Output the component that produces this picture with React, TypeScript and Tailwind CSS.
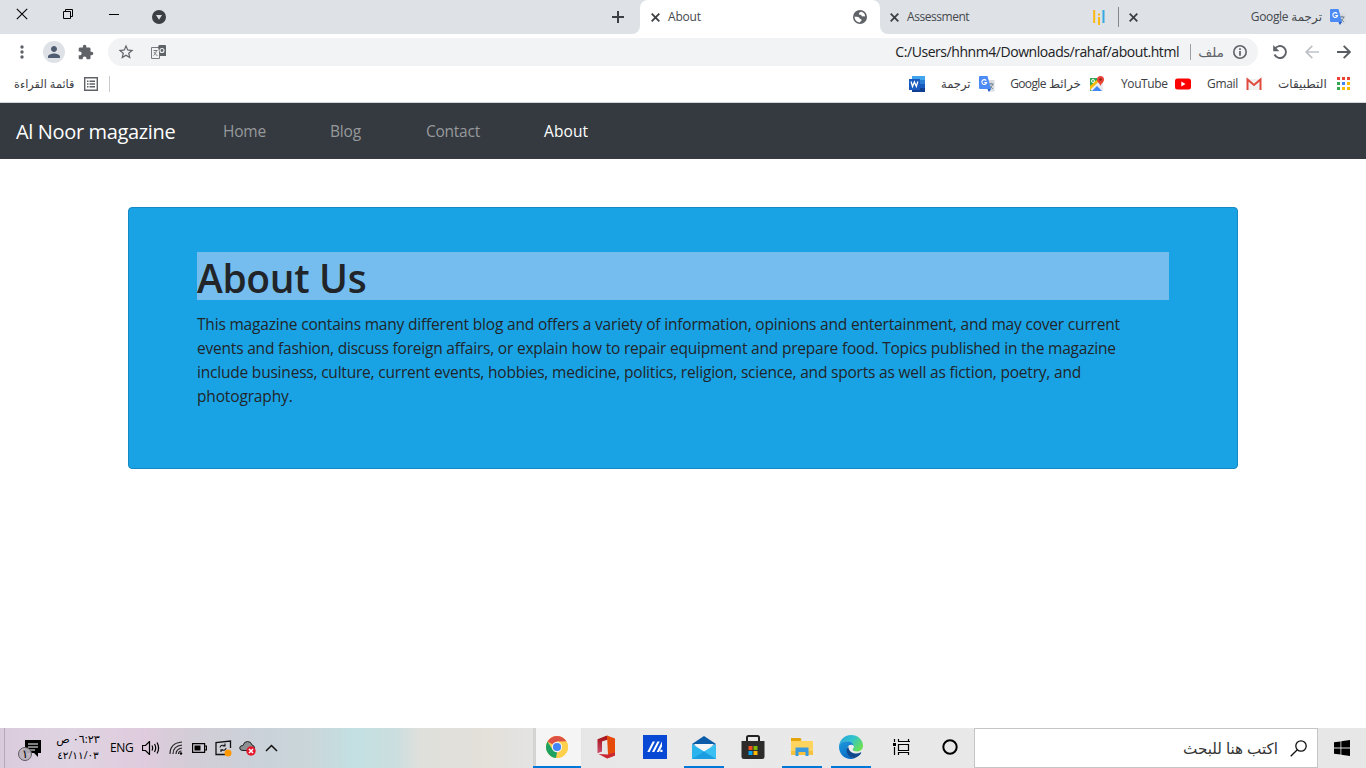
import React from "react";
import { MdStarBorder, MdPerson } from "react-icons/md";

const Close = () => (
  <svg className="size-[9px] shrink-0" viewBox="0 0 9 9"><path d="M.7.7l7.600 7.600M8.300.7L.7 8.300" stroke="#3c4043" strokeWidth="1.800" /></svg>
);

const Translate = () => (
  <svg className="size-4 shrink-0" viewBox="0 0 16 16">
    <path d="M6 4h9.5v11.5H10z" fill="#dadce0" />
    <path d="M9.5 8h5M12 6.8V8M13.8 8c-.5 2-2 3.500-3.500 4.500M10.500 9.500c.8 1.400 2 2.500 3.300 3.200" stroke="#607988" strokeWidth=".9" fill="none" />
    <path d="M1 0h7.500l3.500 13H1a1 1 0 0 1-1-1V1a1 1 0 0 1 1-1z" fill="#4c8bf5" />
    <path d="M8.500 13H12l-2.200 3z" fill="#1a56c4" />
    <path d="M7.200 4.600A2.400 2.400 0 1 0 7.600 6.600H5.300" stroke="#fff" strokeWidth="1.100" fill="none" />
  </svg>
);

const Globe = () => (
  <svg className="size-[14px] shrink-0" viewBox="0 0 14 14">
    <circle cx="7" cy="7" r="7" fill="#5f6368" />
    <path d="M8.300 1.700C7 2 6 2.700 6 3.800c0 1 .9 1.100 1.900 1.100.8 0 .6 1.300 1.500 1.500.9.100 1.200-.6 2.800.4A5.400 5.400 0 0 0 8.300 1.700z" fill="#fff" />
    <path d="M1.600 6.600c1.200.300 3.500.100 4.500.900.900.700.300 1.400 1.400 1.600 1 .200 1.300.500 1 1.400-.3.800-1.200.7-1.500 1.900A5.400 5.400 0 0 1 1.600 6.600z" fill="#fff" />
  </svg>
);

function TabStrip() {
  return (
    <div className="flex h-[34px] bg-[#dee1e6] text-[12px] text-[#45494d]">
      <div className="flex h-7 w-[137px] shrink-0">
        <div className="flex w-[44px] items-center justify-center">
          <svg width="12" height="12" viewBox="0 0 12 12"><path d="M.8.8l10.400 10.400M11.200.8L.8 11.200" stroke="#000" strokeWidth="1.100" /></svg>
        </div>
        <div className="flex w-[47px] items-center justify-center">
          <svg width="10" height="10" viewBox="0 0 10 10" fill="none" stroke="#000"><path d="M.5 2.500h7v7h-7zM2.500 2.500v-2h7v7h-2" /></svg>
        </div>
        <div className="flex w-[46px] items-center justify-center">
          <svg width="10" height="10" viewBox="0 0 10 10"><path d="M0 5.500h10" stroke="#000" /></svg>
        </div>
      </div>
      <div className="flex w-[44px] shrink-0 items-center justify-center">
        <svg width="14" height="14" viewBox="0 0 14 14"><circle cx="7" cy="7" r="7" fill="#3c4043" /><path d="M4 5h6L7 9.700z" fill="#dee1e6" /></svg>
      </div>
      <div className="flex-1" />
      <div className="flex w-[28px] shrink-0 items-center justify-center">
        <svg width="12" height="12" viewBox="0 0 12 12"><path d="M6 0v12M0 6h12" stroke="#3c4043" strokeWidth="2" /></svg>
      </div>
      <div className="flex w-2 shrink-0 bg-[linear-gradient(#dee1e6_50%,#fff_50%)]"><div className="h-full w-2 rounded-br-lg bg-[#dee1e6]" /></div>
      <div className="flex w-[240px] shrink-0 bg-[#dee1e6]">
        <div className="flex flex-1 items-center rounded-t-lg bg-white pr-[13px] pl-[11px]">
          <Close />
          <span className="ml-2 tracking-[-0.200px]">About</span>
          <span className="flex-1" />
          <Globe />
        </div>
      </div>
      <div className="flex w-[238px] shrink-0 bg-white">
        <div className="flex flex-1 items-center rounded-bl-lg bg-[#dee1e6] pr-[13px] pl-[10px]">
          <Close />
          <span className="ml-2 tracking-[-0.450px]">Assessment</span>
          <span className="flex-1" />
          <svg width="12" height="17" viewBox="0 0 12 17">
            <path d="M1.200 1v13M6 8v8" stroke="#fcb813" strokeWidth="2" /><path d="M5 4.500h2v2H5z" fill="#fcb813" /><path d="M10.500 1v13" stroke="#35a9e0" strokeWidth="2" />
          </svg>
        </div>
      </div>
      <div className="flex w-[248px] shrink-0 items-center pr-[20px]">
        <div className="h-5 w-px bg-[#85888c]" />
        <span className="ml-[10px] flex"><Close /></span>
        <span className="flex-1" />
        <span dir="rtl" className="mr-2 text-[12px] whitespace-nowrap tracking-[-0.350px]">ترجمة Google</span>
        <Translate />
      </div>
    </div>
  );
}

function Toolbar() {
  return (
    <div className="flex h-9 items-center bg-white text-[#5f6368]">
      <div className="flex w-[43px] shrink-0 justify-center">
        <svg width="4" height="14" viewBox="0 0 4 14" fill="#5f6368"><circle cx="2" cy="2" r="1.700" /><circle cx="2" cy="7" r="1.700" /><circle cx="2" cy="12" r="1.700" /></svg>
      </div>
      <div className="flex size-[22px] shrink-0 items-center justify-center rounded-full bg-[#dee1e6] text-[#4f5b70]"><MdPerson className="size-[18px]" /></div>
      <svg className="ml-[13px] size-4 shrink-0" viewBox="1 0 23 23" fill="#5f6368">
        <path d="M20.500 11H19V7c0-1.100-.9-2-2-2h-4V3.500C13 2.120 11.880 1 10.500 1S8 2.120 8 3.500V5H4c-1.100 0-2 .9-2 2v3.800h1.500c1.490 0 2.700 1.210 2.700 2.700s-1.210 2.700-2.700 2.700H2V20c0 1.100.9 2 2 2h3.800v-1.500c0-1.490 1.210-2.700 2.700-2.700s2.700 1.210 2.700 2.700V22H17c1.100 0 2-.9 2-2v-4h1.500a2.500 2.500 0 0 0 0-5z" />
      </svg>
      <div className="ml-[14px] flex h-7 w-[1150px] shrink-0 items-center rounded-full bg-[#f1f3f4] pr-[11px] pl-[9px]">
        <MdStarBorder className="size-[18px]" />
        <svg className="ml-[16px]" width="15" height="15" viewBox="0 0 15 15">
          <path d="M.5 2.500h8v11h-8z" fill="none" stroke="#777a7e" /><path d="M8 0h6a1 1 0 0 1 1 1v10H9L7 2z" fill="#5f6368" />
          <path d="M2.500 5.500h4M5.500 5.500c-.5 2.500-1.500 4-3 5M3 7c1 2 2 3 3.500 3.500" stroke="#777a7e" fill="none" />
          <circle cx="11" cy="5.500" r="2" fill="none" stroke="#f1f3f4" strokeWidth="1.100" />
        </svg>
        <span className="flex-1" />
        <span className="-mt-px text-[14px] tracking-[-0.440px] text-[#202124]">C:/Users/hhnm4/Downloads/rahaf/about.html</span>
        <span className="ml-[11px] h-4 w-px bg-[#9aa0a6]" />
        <span className="ml-[7px] w-[26px] text-right text-[13.500px]">ملف</span>
        <svg className="ml-[9px]" width="14" height="14" viewBox="0 0 14 14"><circle cx="7" cy="7" r="6.200" fill="none" stroke="#5f6368" strokeWidth="1.600" /><path d="M7 3.200v1.700M7 6v4.800" stroke="#5f6368" strokeWidth="1.700" /></svg>
      </div>
      <svg className="ml-[15px] shrink-0" width="14" height="14" viewBox="0 0 14 14"><path d="M1.700 4.200A6 6 0 1 1 1.500 9.500" fill="none" stroke="#5f6368" strokeWidth="1.900" /><path d="M.2 0v6.200h6.200z" fill="#5f6368" /></svg>
      <svg className="ml-[18px] shrink-0" width="14" height="14" viewBox="0 0 14 14" fill="none" stroke="#bdc1c6" strokeWidth="1.700"><path d="M14 7H1.500M7.300.8L1.200 7l6.100 6.200" /></svg>
      <svg className="ml-[18px] shrink-0" width="14" height="14" viewBox="0 0 14 14" fill="none" stroke="#5a5e63" strokeWidth="1.900"><path d="M0 7h12.500M6.700.8L12.800 7l-6.100 6.200" /></svg>
    </div>
  );
}

const appDots = ["#ea4335", "#ea4335", "#ea4335", "#34a853", "#4285f4", "#fbbc04", "#34a853", "#fbbc04", "#fbbc04"];

function Bookmarks() {
  return (
    <div className="flex h-[33px] items-center border-b border-[#d5d6d9] bg-white pb-[5px] text-[12px] text-[#3c4043]">
      <span className="ml-[14px] w-[61px] pt-px text-[11.300px] whitespace-nowrap">قائمة القراءة</span>
      <svg className="ml-[9px]" width="14" height="14" viewBox="0 0 14 14"><path d="M.7.7h12.600v12.600H.7z" fill="none" stroke="#5f6368" strokeWidth="1.400" /><path d="M3 4.200h1.500M5.500 4.200H11M3 7h1.500M5.500 7H11M3 9.800h1.500M5.500 9.800H11" stroke="#5f6368" strokeWidth="1.400" /></svg>
      <span className="ml-[11px] h-4 w-px bg-[#c8cacd]" />
      <span className="flex-1" />
      <svg width="16" height="16" viewBox="0 0 16 16">
        <path d="M3 0h13v4H3z" fill="#41a5ee" /><path d="M3 4h13v4H3z" fill="#2b7cd3" /><path d="M3 8h13v4H3z" fill="#185abd" /><path d="M3 12h13v4H3z" fill="#103f91" />
        <path d="M0 3h11v11H0z" fill="#185abd" /><path d="M2 5.500l1.500 5 1.900-4.500 1.900 4.500 1.600-5" fill="none" stroke="#fff" strokeWidth="1.300" />
      </svg>
      <span className="ml-[16px] w-[30px] text-[11.500px]">ترجمة</span>
      <span className="ml-2"><Translate /></span>
      <span dir="rtl" className="ml-[15px] w-[71px] text-[12px] whitespace-nowrap tracking-[-0.650px]">خرائط Google</span>
      <svg className="ml-2" width="16" height="16" viewBox="0 0 16 16">
        <path d="M1 2h13v13H1z" fill="#34a853" /><path d="M1 13L11 4l3 3v8H3z" fill="#e8eaed" /><path d="M3 15l5-5 5 5z" fill="#4285f4" /><path d="M1 10V14l9-9-1-2z" fill="#fbbc04" />
        <path d="M11.500 0a3.500 3.500 0 0 1 3.500 3.700c0 2.300-2.500 3.300-3.500 6.300C10.500 7 8 6 8 3.700A3.500 3.500 0 0 1 11.500 0z" fill="#ea4335" /><circle cx="11.500" cy="3.500" r="1.200" fill="#8c211b" />
        <circle cx="4" cy="5" r="1.500" fill="none" stroke="#fff" />
      </svg>
      <span className="ml-4 w-[46px] tracking-[-0.400px]">YouTube</span>
      <svg className="ml-2" width="16" height="16" viewBox="0 0 16 16"><rect y="2.500" width="16" height="11" rx="2.500" fill="red" /><path d="M6.300 5.500L10.500 8l-4.200 2.500z" fill="#fff" /></svg>
      <span className="ml-4 w-[31px] tracking-[-0.3px]">Gmail</span>
      <svg className="ml-2" width="16" height="16" viewBox="0 0 16 16"><path d="M1 3h14v11H1z" fill="#f1f1f1" /><path d="M1.500 14V3.500L8 9l6.500-5.500V14" fill="none" stroke="#e04a3f" strokeWidth="2" /></svg>
      <span className="ml-4 w-[50px] text-[12px] whitespace-nowrap">التطبيقات</span>
      <svg className="mr-[16px] ml-[9px]" width="13" height="13" viewBox="0 0 13 13">
        {appDots.map((c, i) => <rect key={i} x={(i % 3) * 5} y={Math.floor(i / 3) * 5} width="3" height="3" fill={c} />)}
      </svg>
    </div>
  );
}

function Page() {
  return (
    <main className="flex flex-1 flex-col bg-white">
      <nav className="flex h-14 items-center bg-[#343a40] pt-0.5 pl-4 text-[15.500px] text-[#98999c]">
        <span className="w-[207px] text-[20px] tracking-[-0.350px] text-white">Al Noor magazine</span>
        <a className="w-[107px] tracking-[-0.200px]">Home</a>
        <a className="w-[96px] tracking-[-0.200px]">Blog</a>
        <a className="w-[118px] tracking-[-0.250px]">Contact</a>
        <a className="tracking-[0.100px] text-white">About</a>
      </nav>
      <section className="mx-32 mt-12 h-[262px] rounded border border-[#1489c3] bg-[#19a3e5] px-[68px] pt-11 text-[#212529]">
        <h1 className="h-12 bg-[#75bdee] text-[39px] leading-[52px] font-semibold tracking-[-0.350px]">About Us</h1>
        <p className="mt-3 text-[15.500px] leading-6 whitespace-nowrap">
          <span className="block tracking-[-0.187px]">This magazine contains many different blog and offers a variety of information, opinions and entertainment, and may cover current</span>
          <span className="block tracking-[-0.203px]">events and fashion, discuss foreign affairs, or explain how to repair equipment and prepare food. Topics published in the magazine</span>
          <span className="block tracking-[-0.203px]">include business, culture, current events, hobbies, medicine, politics, religion, science, and sports as well as fiction, poetry, and</span>
          <span className="block tracking-[-0.150px]">photography.</span>
        </p>
      </section>
    </main>
  );
}

const Chrome = () => (
  <svg className="-ml-1" width="22" height="22" viewBox="0 0 22 22">
    <circle cx="11" cy="11" r="11" fill="#fc5" />
    <path d="M11 11L1.500 5.500A11 11 0 0 1 20.500 5.500H11z" fill="#de5246" />
    <path d="M1.500 5.500L6.500 13.500 11 16l-1 6A11 11 0 0 1 1.500 5.500z" fill="#1da261" />
    <path d="M11 5.800h9.600A11 11 0 0 1 10.200 22l5-8.500z" fill="#ffd04b" />
    <circle cx="11" cy="11" r="5.200" fill="#f4f4f4" /><circle cx="11" cy="11" r="4.100" fill="#4285f4" />
  </svg>
);
const Office = () => (
  <svg width="20" height="24" viewBox="0 0 20 24">
    <defs><linearGradient id="of" x1="0" y1="0" x2="0" y2="1"><stop stopColor="#a50d10" /><stop offset="1" stopColor="#c94f72" /></linearGradient></defs>
    <path d="M11 .5L1.500 4.300v14L6 16.500V6.500L12 4.500z" fill="url(#of)" />
    <path d="M11 .5l8 3v17L11 23.500l1-4z" fill="#e64a08" /><path d="M11 23.500L2.500 19l9.500.5 7-2v3z" fill="#c92835" />
  </svg>
);
const Armoury = () => (
  <svg width="24" height="24" viewBox="0 0 24 24"><path d="M0 0h24v24H0z" fill="#0749d4" /><path d="M4.300 17h2.300L12 6.500H9.700zM9 17h2.300L16.700 6.500h-2.300zM13.700 17H16l3-5.500V6.500h-.1zM17.300 14.800h2.200V17h-2.200z" fill="#fff" /></svg>
);
const Mail = () => (
  <svg width="24" height="23" viewBox="0 0 24 23"><path d="M0 8L12 0l12 8-12 6z" fill="#0a5ca8" /><path d="M2 8h20l-8 8H9z" fill="#f4f6f8" /><path d="M0 8l12 7.500V23H0z" fill="#2bb3ee" /><path d="M24 8v15H0z" fill="#39bff2" /><path d="M12 15.500L24 23H0z" fill="#1b9de1" /></svg>
);
const Store = () => (
  <svg width="24" height="24" viewBox="0 0 24 24"><path d="M6 7V2.500Q6 1 7.500 1h9Q18 1 18 2.500V7" fill="none" stroke="#222" strokeWidth="2" /><path d="M.5 6h23v15.500q0 2.500-2.500 2.500H3Q.5 24 .5 21.500z" fill="#2d2c2b" /><path d="M7.500 11h4v4h-4z" fill="#f25022" /><path d="M12.500 11h4v4h-4z" fill="#7fba00" /><path d="M7.500 16h4v4h-4z" fill="#00a4ef" /><path d="M12.500 16h4v4h-4z" fill="#ffb900" /></svg>
);
const Explorer = () => (
  <svg width="22" height="20" viewBox="0 0 22 20"><path d="M0 2h9l2 2h11v13H0z" fill="#ffd45f" /><path d="M0 1h9.500l1 2L9 4H0z" fill="#e5a50a" /><path d="M0 14h22v4H0z" fill="#f8c23f" /><path d="M4.500 10.500h13V19h-3v-4h-7v4h-3z" fill="#3b9ade" /></svg>
);
const Edge = () => (
  <svg width="24" height="24" viewBox="0 0 24 24">
    <defs>
      <linearGradient id="e1" x1="0" y1="0" x2="1" y2=".6"><stop stopColor="#259ed9" /><stop offset=".5" stopColor="#31c3d0" /><stop offset="1" stopColor="#69df58" /></linearGradient>
      <linearGradient id="e2" x1="0" y1="0" x2=".6" y2="1"><stop stopColor="#209bdd" /><stop offset="1" stopColor="#0869c3" /></linearGradient>
    </defs>
    <path d="M0 11C1 4 6 0 12 0c7 0 12 5 12 10.500 0 4-3 6-6.500 6-2.500 0-4-1-4-1.800 0-.8 1.200-1.200 1.200-3.200 0-3-3-5.200-6.200-5.200C4 6.300 1 8 0 11z" fill="url(#e1)" />
    <path d="M0 12C0 8 4 6.300 8.500 6.300c3.200 0 6 2 6.200 4.700C13 8.500 8 9.500 8 14.500c0 5 4 8.500 8 8.500-1.500.8-3 1-4 1C5 24 0 18.500 0 12z" fill="url(#e2)" />
    <path d="M9.500 11C7.500 13 7 16 8.500 19c2 3.800 5.500 4.500 8 3.700 2.500-1 4.500-2.700 5.700-4.700.3-.6-.2-.8-.7-.5-5 2.500-12 .500-12-6.500z" fill="#114a8c" />
    <path d="M9.500 11.500c1.500-1.800 4-1.300 5.200-.5 0 2-1.200 2.900-1.200 3.700 0 1.200 2.500 2.500 6 1.800-4 2.500-10 .500-10-5z" fill="#eee" />
  </svg>
);
const TaskView = () => (
  <svg className="ml-1" width="18" height="16" viewBox="0 0 18 16" fill="none" stroke="#000" strokeWidth="1.200"><path d="M1.500 0v3M1.500 8v8M5.500 0v2.500h10V0M5.500 5.500h10v6h-10zM5.500 16v-2.500h10V16M15.500 2.500H17" /><path d="M0 4h3v3H0z" fill="#000" stroke="none" /></svg>
);

const Cortana = () => <svg className="ml-0.5" width="16" height="16" viewBox="0 0 16 16"><circle cx="8" cy="8" r="6.700" fill="none" stroke="#000" strokeWidth="2" /></svg>;

const apps = [
  { Icon: Chrome, active: true, open: true },
  { Icon: Office }, { Icon: Armoury }, { Icon: Mail, open: true }, { Icon: Store },
  { Icon: Explorer, open: true }, { Icon: Edge, open: true }, { Icon: TaskView }, { Icon: Cortana },
];

function Tray() {
  return (
    <div className="flex w-[290px] shrink-0 items-center text-[12px] text-black">
      <div className="ml-1 h-full w-px bg-[#b4aab5]" />
      <div className="relative ml-[11px] h-[26px] w-[27px] shrink-0">
        <svg width="27" height="26" viewBox="0 0 27 26">
          <path d="M9 5h16v13h-3v4l-4-4H9z" fill="#000" /><path d="M12 9h10M12 12h10M12 15h7" stroke="#fff" strokeWidth="1.100" />
          <circle cx="9" cy="19" r="6.500" fill="#bcb3bd" fillOpacity=".92" stroke="#5e5960" />
        </svg>
        <span className="absolute top-[11px] left-[1px] w-4 text-center text-[12px] leading-4">١</span>
      </div>
      <div className="ml-[11px] flex h-9 w-[48px] shrink-0 flex-col items-center text-[11.200px] leading-[17px] whitespace-nowrap">
        <span dir="rtl">٠٦:٢٣ ص</span>
        <span className="text-[10.500px]">٤٢/١١/٠٣</span>
      </div>
      <span className="ml-[8px] w-[24px] tracking-[-0.350px]">ENG</span>
      <svg className="ml-[8px] shrink-0" width="18" height="14" viewBox="0 0 18 14" fill="none" stroke="#000" strokeWidth="1.200"><path d="M.5 4.500h3l4-4v13l-4-4h-3zM10 4.500q1.300 2.500 0 5M12.500 3q2.400 4 0 8M15 1.500q3.200 5.500 0 11" /></svg>
      <svg className="ml-[9px] shrink-0" width="14" height="14" viewBox="0 0 14 14" fill="none" stroke="#222" strokeWidth="1.200"><path d="M1 13Q1 2 13 1M4 13Q4 5 13 4M7 13Q7 8 13 7" /><path d="M9.500 13q0-3 3-3" /><circle cx="12" cy="12.500" r="1.200" fill="#000" stroke="none" /></svg>
      <svg className="ml-[9px] shrink-0" width="15" height="10" viewBox="0 0 15 10"><path d="M.6.6h12v8.800H.6zM13 3h1.500v4H13" fill="none" stroke="#000" strokeWidth="1.200" /><path d="M2.500 2.500H8.500v5h-6z" /></svg>
      <svg className="ml-[8px] shrink-0" width="17" height="17" viewBox="0 0 17 17"><path d="M10 14.500H1v-12L15.500 1v7" fill="none" stroke="#111" strokeWidth="1.300" /><path d="M5 7.500Q5.500 4.500 9.500 5.500M10 3.500V6H7.800M11 8q-.5 3-4.500 2M6 12V9.700h2.200" fill="none" stroke="#111" strokeWidth="1.100" /><circle cx="13" cy="13" r="3.500" fill="#ff9800" /></svg>
      <svg className="ml-[7px] shrink-0" width="17" height="16" viewBox="0 0 17 16"><path d="M4 10.500Q.7 10.500.7 8T4 5.500Q5 1.500 8.500 1.500T13 5q2.500.5 2.500 3t-3 2.500z" fill="#8b9092" stroke="#222" /><circle cx="12" cy="11" r="4.700" fill="#e3182d" /><path d="M10 9l4 4M14 9l-4 4" stroke="#fff" strokeWidth="1.500" /></svg>
      <svg className="ml-[9px] shrink-0" width="13" height="8" viewBox="0 0 13 8"><path d="M1 7l5.500-5.500L12 7" fill="none" stroke="#111" strokeWidth="1.500" /></svg>
    </div>
  );
}

function Taskbar() {
  return (
    <footer className="flex h-10 bg-[linear-gradient(90deg,#dacbdc_0px,#dfd4e2_70px,#dfcbdd_145px,#d3cdd7_190px,#cad2d9_265px,#cad6da_310px,#c3e0e2_355px,#cbdedf_395px,#dfe0db_420px,#e4e0da_490px,#e4e4e4_535px,#e9e9e9_650px,#e7e7e8_1366px)]">
      <Tray />
      <div className="flex-1" />
      {apps.map(({ Icon, active, open }, i) => (
        <div key={i} className={active ? "flex w-12 shrink-0 flex-col items-center border-l-[3px] border-[#d4d4d3] bg-[#f5f5f5]" : "flex w-[49px] shrink-0 flex-col items-center"}>
          <div className="flex flex-1 items-center"><Icon /></div>
          <div className={open ? (active ? "-ml-[3px] h-0.5 w-12 bg-[#0078d7]" : "h-0.5 w-10 bg-[#0078d7]") : "h-0.5 w-10"} />
        </div>
      ))}
      <div className="ml-px flex w-[344px] shrink-0 items-center border border-[#c5c5c6] bg-white pr-[10px]">
        <span className="flex-1" />
        <span dir="rtl" className="text-[15.200px] text-[#333]">اكتب هنا للبحث</span>
        <svg className="ml-[12px]" width="17" height="17" viewBox="0 0 17 17" fill="none" stroke="#111" strokeWidth="1.300"><circle cx="11" cy="6" r="5.200" /><path d="M7.300 9.700L.7 16.300" /></svg>
      </div>
      <div className="flex w-12 shrink-0 items-center justify-center">
        <svg width="16" height="16" viewBox="0 0 16 16"><path d="M0 2.300l6.500-.9v6.100H0zM7.300 1.300L16 0v7.500H7.300zM0 8.400h6.500v6.200L0 13.700zM7.300 8.400H16V16l-8.700-1.300z" /></svg>
      </div>
    </footer>
  );
}

export default function App() {
  return (
    <div className="flex h-[768px] w-[1366px] flex-col overflow-hidden bg-white font-['Open_Sans','DejaVu_Sans',sans-serif]">
      <TabStrip />
      <Toolbar />
      <Bookmarks />
      <Page />
      <Taskbar />
    </div>
  );
}
